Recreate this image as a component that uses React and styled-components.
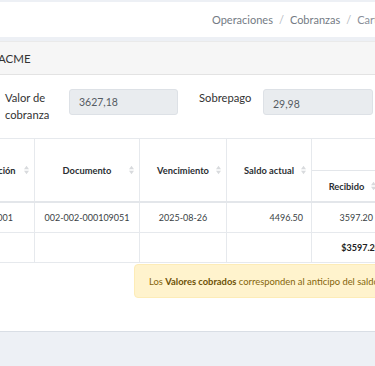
import React from "react";
import styled, { createGlobalStyle } from "styled-components";

const GlobalStyle = createGlobalStyle`
	html, body {
		margin: 0;
		padding: 0;
		overflow: hidden;
		background: #edf0f5;
		font-family: Lato, "Open Sans", sans-serif;
		color: #333;
	}
`;

const Page = styled.div`
	width: 375px;
	height: 366px;
	overflow: hidden;
	padding-top: 2px;
	box-sizing: border-box;
`;

const TopBar = styled.header`
	height: 35px;
	background: #ffffff;
	display: flex;
	align-items: center;
	padding-left: 212px;
	white-space: nowrap;
`;

const Crumb = styled.span`
	font-size: 11px;
	color: ${(props) => (props.active ? "#8a9099" : "#747b84")};
`;

const Sep = styled.span`
	font-size: 11px;
	color: #b5bac1;
	padding: 0 6px;
`;

const Card = styled.section`
	margin-top: 4px;
	background: #ffffff;
	border-bottom: 1px solid #d9dee5;
	height: 291px;
	box-sizing: border-box;
`;

const CardHeader = styled.div`
	height: 34px;
	background: #f6f6f6;
	border-top: 1px solid #eaeaea;
	border-bottom: 1px solid #e3e3e3;
	box-sizing: border-box;
	display: flex;
	align-items: center;
	font-size: 11.5px;
	color: #333;
	text-indent: -2px;
`;

const CardBody = styled.div`
	padding: 14px 0 0 5px;
`;

const FormRow = styled.div`
	display: grid;
	grid-template-columns: 64px 109px 85px 110px;
	align-items: start;
`;

const Label = styled.label`
	font-size: 11.2px;
	line-height: 17px;
	color: #333;
	padding-left: ${(props) => props.indent || 0}px;
`;

const ReadOnly = styled.div`
	height: 26px;
	box-sizing: border-box;
	background: #e9ecef;
	border: 1px solid #dde1e6;
	border-radius: 3px;
	display: flex;
	align-items: center;
	padding-left: 9px;
	padding-top: ${(props) => props.drop || 0}px;
	font-size: 10.5px;
	color: #555b62;
`;

const Table = styled.table`
	margin-top: 15px;
	margin-left: -65px;
	width: 621px;
	table-layout: fixed;
	border-collapse: collapse;
	font-size: 9px;
	color: #3a3f45;
`;

const Th = styled.th`
	position: relative;
	height: ${(props) => (props.sub ? 30 : 31)}px;
	padding: 0 14px;
	text-align: center;
	font-size: 9.3px;
	font-weight: 700;
	color: #2b2f33;
	border: 1px solid #e6e9ed;
	border-bottom: ${(props) => (props.top ? "1px" : "2px")} solid #e3e6ea;
	white-space: nowrap;
	overflow: hidden;
`;

const SortIcon = styled.svg`
	position: absolute;
	right: 5px;
	top: 50%;
	transform: translateY(-50%);
`;

const Td = styled.td`
	height: 29px;
	padding: 0 ${(props) => props.padRight ?? 8}px 0 8px;
	text-align: ${(props) => props.align || "center"};
	font-weight: ${(props) => (props.bold ? 700 : 400)};
	color: ${(props) => (props.bold ? "#222" : "#3a3f45")};
	border: 1px solid #e6e9ed;
	border-top: none;
	white-space: nowrap;
`;

const Alert = styled.div`
	margin: 1px 0 0 129px;
	width: 420px;
	height: 34px;
	box-sizing: border-box;
	background: #fff3cd;
	border: 1px solid #fdecb7;
	border-radius: 4px;
	display: flex;
	align-items: center;
	padding-left: 14px;
	font-size: 9.4px;
	color: #85650a;
	white-space: nowrap;
	b {
		font-weight: 700;
		color: #6e5207;
	}
`;

const Sort = () => (
	<SortIcon width="5" height="9" viewBox="0 0 6 10">
		<path d="M3 0 L6 4 L0 4 Z" fill="#d8dadd" />
		<path d="M3 10 L6 6 L0 6 Z" fill="#d8dadd" />
	</SortIcon>
);

const HeadCell = ({ children, ...rest }) => (
	<Th {...rest}>
		{children}
		{children && <Sort />}
	</Th>
);

export default function App() {
	return (
		<Page>
			<GlobalStyle />
			<TopBar>
				<Crumb>Operaciones</Crumb>
				<Sep>/</Sep>
				<Crumb>Cobranzas</Crumb>
				<Sep>/</Sep>
				<Crumb active>Cartera de clientes</Crumb>
			</TopBar>

			<Card>
				<CardHeader>ACME</CardHeader>
				<CardBody>
					<FormRow>
						<Label>Valor de cobranza</Label>
						<ReadOnly>3627,18</ReadOnly>
						<Label indent={21}>Sobrepago</Label>
						<ReadOnly drop={3}>29,98</ReadOnly>
					</FormRow>

					<Table>
						<colgroup>
							<col style={{ width: 94 }} />
							<col style={{ width: 105 }} />
							<col style={{ width: 87 }} />
							<col style={{ width: 85 }} />
							<col style={{ width: 70 }} />
							<col style={{ width: 90 }} />
							<col style={{ width: 90 }} />
						</colgroup>
						<thead>
							<tr>
								<HeadCell rowSpan={2}>Identificación</HeadCell>
								<HeadCell rowSpan={2}>Documento</HeadCell>
								<HeadCell rowSpan={2}>Vencimiento</HeadCell>
								<HeadCell rowSpan={2}>Saldo actual</HeadCell>
								<Th colSpan={3} top>
									Valores cobrados
								</Th>
							</tr>
							<tr>
								<HeadCell sub>Recibido</HeadCell>
								<HeadCell sub>Retención</HeadCell>
								<HeadCell sub>Total</HeadCell>
							</tr>
						</thead>
						<tbody>
							<tr>
								<Td align="right" padRight={21}>
									1790011001
								</Td>
								<Td>002-002-000109051</Td>
								<Td>2025-08-26</Td>
								<Td align="right">4496.50</Td>
								<Td align="right">3597.20</Td>
								<Td align="right">0.00</Td>
								<Td align="right">3597.20</Td>
							</tr>
							<tr>
								<Td />
								<Td />
								<Td />
								<Td />
								<Td align="right" bold padRight={1}>
									$3597.20
								</Td>
								<Td align="right" bold>
									$0.00
								</Td>
								<Td align="right" bold>
									$3597.20
								</Td>
							</tr>
						</tbody>
					</Table>

					<Alert>
						<span>
							Los <b>Valores cobrados</b> corresponden al anticipo del saldo
							en la cartera del cliente.
						</span>
					</Alert>
				</CardBody>
			</Card>
		</Page>
	);
}
